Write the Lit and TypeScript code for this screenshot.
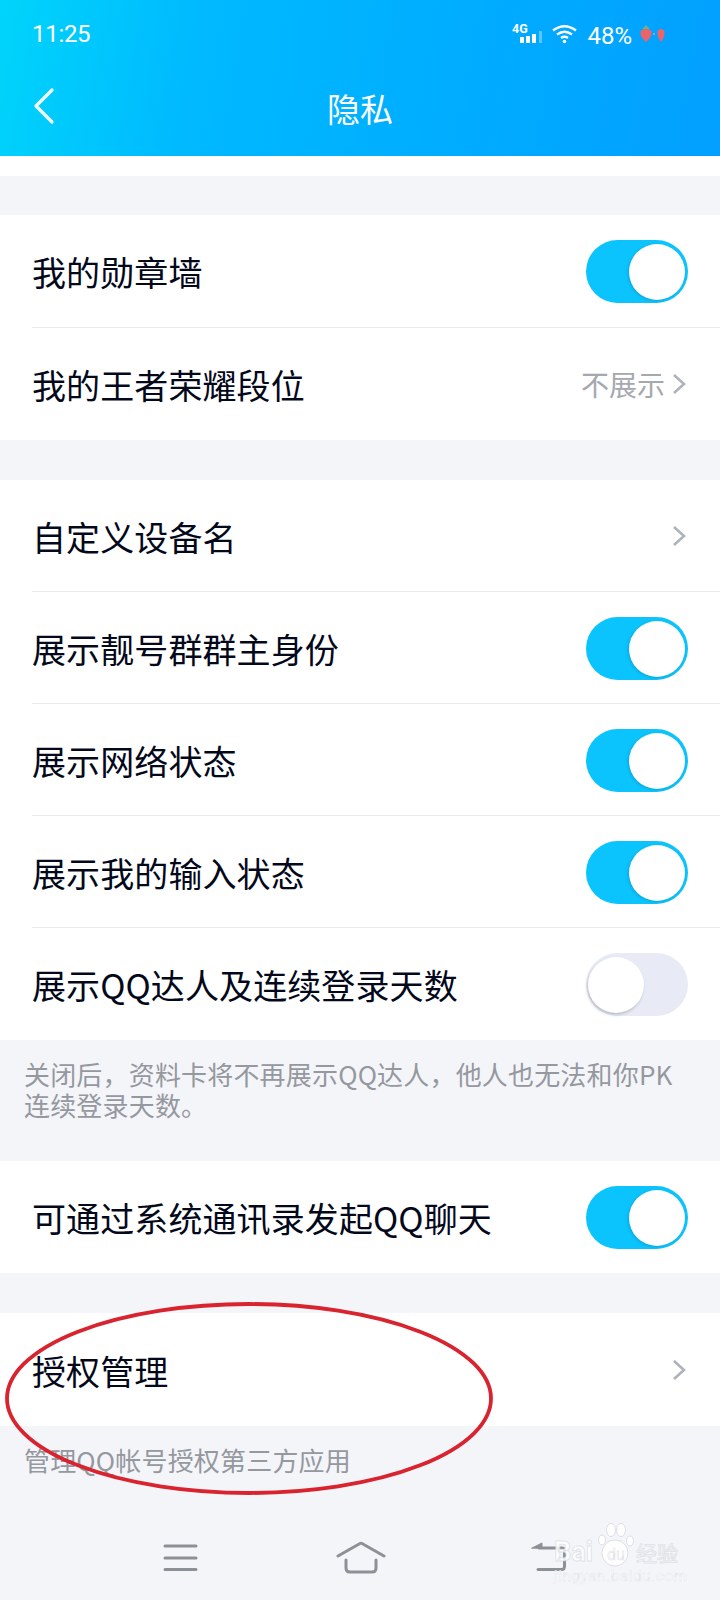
import { LitElement, html, css } from "lit";
import { customElement } from "lit/decorators.js";

const chevron = html`<svg class="chev" viewBox="0 0 14 22" width="14" height="22"><path d="M2 2 L12 11 L2 20" fill="none" stroke="#aeb2ba" stroke-width="2.6"/></svg>`;

@customElement("app-root")
export class AppRoot extends LitElement {
  static styles = css`
    :host { display: block; width: 720px; height: 1600px; }
    * { box-sizing: border-box; }
    .page {
      position: relative; width: 720px; height: 1600px; overflow: hidden;
      background: #f4f5f9; display: flex; flex-direction: column;
      font-family: "Noto Sans CJK SC", "Noto Sans", sans-serif; color: #03081a;
    }
    header {
      height: 156px; flex: none; color: #fff; padding: 0 0 0 32px;
      background: linear-gradient(100deg, #00d4fb 0%, #00b9ff 28%, #00acff 65%, #029fff 100%);
      display: flex; flex-direction: column;
    }
    .status { height: 68px; display: flex; align-items: center; justify-content: space-between; padding-right: 55px; }
    .time { font: 24px/1 "Roboto", sans-serif; letter-spacing: -0.3px; }
    .sys { display: flex; align-items: center; gap: 8px; font: 24px/1 "Roboto", sans-serif; }
    .sys .pct { margin-left: 2px; padding-top: 3px; }
    .nav { height: 88px; display: flex; align-items: center; position: relative; padding-bottom: 8px; }
    .title { flex: 1; text-align: center; font-size: 33px; line-height: 1; padding-right: 32px; }
    .back { position: absolute; left: 0; top: 18px; }
    .white { height: 20px; flex: none; background: #fff; }
    .group { background: #fff; flex: none; margin-top: 40px; }
    .g1 { margin-top: 39px; }
    .g1 .row + .row { margin-top: 1px; }
    .row { height: 112px; padding: 0 32px; position: relative; display: flex; align-items: center; justify-content: space-between; font-size: 34px; line-height: 1; }
    .row + .row::before { content: ""; position: absolute; left: 32px; right: 0; top: -1px; height: 1px; background: #e9eaec; }
    .label { position: relative; top: 1px; letter-spacing: 0.1px; }
    .value { display: flex; align-items: center; gap: 7px; font-size: 28px; color: #a5a8af; padding-right: 2px; }
    .chev { display: block; }
    .toggle { width: 102px; height: 63px; border-radius: 32px; background: #0cc4fd; margin-top: 1px; position: relative; }
    .toggle::after { content: ""; position: absolute; right: 3px; top: 4px; width: 56px; height: 56px; border-radius: 50%; background: #fff; box-shadow: -1px 1px 3px rgba(0,60,100,.22); }
    .toggle.off { background: #e8ebf5; }
    .toggle.off::after { right: auto; left: 2px; box-shadow: -1px 2px 3px rgba(60,60,80,.25); }
    .note { font-size: 26px; line-height: 31px; color: #95989f; padding: 0 24px; flex: none; letter-spacing: 0.18px; }
    .note.n1 { height: 121px; padding-top: 18px; }
    .note.n2 { padding-top: 18px; }
    .g3 { margin-top: 0; }
    .g4 .row { height: 113px; }
    .ellipse { position: absolute; left: 5px; top: 1302px; }
    .nv { position: absolute; }
    .nv.menu { left: 162px; top: 1542px; }
    .nv.home { left: 336px; top: 1541px; }
    .nv.ret { left: 531px; top: 1540px; }
    .wm { position: absolute; left: 530px; top: 1510px; width: 170px; height: 90px; }
    .wm span { position: absolute; color: rgba(255,255,255,.85); -webkit-text-stroke: 1px rgba(205,209,216,.55); line-height: 1; white-space: nowrap; }
    .wm .brand { left: 24px; top: 29px; font: 700 27px/1 "Roboto", sans-serif; }
    .wm .du { left: 77px; top: 37px; font: 400 16px/1 "Roboto", sans-serif; -webkit-text-stroke: .5px rgba(205,209,216,.7); }
    .wm .jy { left: 106px; top: 32px; font-size: 21px; }
    .wm .url { left: 24px; top: 59px; font: 400 15.500px/1 "Roboto", sans-serif; letter-spacing: .45px; -webkit-text-stroke: .4px rgba(205,209,216,.6); }
    .wm svg { position: absolute; left: 67px; top: 13px; }
  `;

  private toggle(on = true) {
    return html`<span class="toggle ${on ? "" : "off"}"></span>`;
  }

  render() {
    return html`<div class="page">
      <header>
        <div class="status">
          <span class="time">11:25</span>
          <span class="sys">
            <svg width="32" height="24" viewBox="0 0 32 24">
              <text x="0" y="11" font-family="Roboto" font-weight="700" font-size="12.5" fill="#fff">4G</text>
              <rect x="8" y="15" width="4" height="6" fill="#fff"/>
              <rect x="14" y="14" width="4" height="7" fill="#fff"/>
              <rect x="20" y="12" width="4" height="9" fill="#fff"/>
              <rect x="27" y="9" width="3" height="12" fill="#fff" opacity=".35"/>
            </svg>
            <svg width="25" height="20" viewBox="0 0 25 20" fill="none" stroke="#fff" stroke-width="2.3">
              <path d="M1 6.500 Q12.500 -2 24 6.500"/><path d="M5 10.500 Q12.500 5 20 10.500"/><path d="M9 14 Q12.500 11.500 16 14"/>
              <circle cx="12.500" cy="17.500" r="1.800" fill="#fff" stroke="none"/>
            </svg>
            <span class="pct">48%</span>
            <svg width="25" height="20" viewBox="0 0 25 20">
              <path d="M0.500 7 Q6 3 11.500 7 Q12.500 13 6 18 Q-0.500 13 0.500 7Z" fill="#e9646b"/>
              <path d="M2 5 L6 1 L10 5 Z" fill="#6fae8c"/>
              <circle cx="14" cy="10" r="1" fill="#c9a0b0"/>
              <path d="M17.500 7 Q21 3 24.500 7 Q25 13 21 18 Q17 13 17.500 7Z" fill="#e9646b"/>
            </svg>
          </span>
        </div>
        <div class="nav">
          <svg class="back" width="24" height="40" viewBox="0 0 24 40"><path d="M20 4 L4 20 L20 36" fill="none" stroke="#fff" stroke-width="3.200" stroke-linecap="round" stroke-linejoin="round" opacity=".95"/></svg>
          <div class="title">隐私</div>
        </div>
      </header>
      <div class="white"></div>
      <section class="group g1">
        <div class="row"><span class="label">我的勋章墙</span>${this.toggle()}</div>
        <div class="row"><span class="label">我的王者荣耀段位</span><span class="value">不展示${chevron}</span></div>
      </section>
      <section class="group">
        <div class="row"><span class="label">自定义设备名</span><span class="value">${chevron}</span></div>
        <div class="row"><span class="label">展示靓号群群主身份</span>${this.toggle()}</div>
        <div class="row"><span class="label">展示网络状态</span>${this.toggle()}</div>
        <div class="row"><span class="label">展示我的输入状态</span>${this.toggle()}</div>
        <div class="row"><span class="label">展示QQ达人及连续登录天数</span>${this.toggle(false)}</div>
      </section>
      <div class="note n1">关闭后，资料卡将不再展示QQ达人，他人也无法和你PK<br />连续登录天数。</div>
      <section class="group g3">
        <div class="row"><span class="label">可通过系统通讯录发起QQ聊天</span>${this.toggle()}</div>
      </section>
      <section class="group g4">
        <div class="row"><span class="label">授权管理</span><span class="value">${chevron}</span></div>
      </section>
      <div class="note n2">管理QQ帐号授权第三方应用</div>

      <svg class="ellipse" width="490" height="193" viewBox="0 0 490 193"><ellipse cx="244" cy="96.500" rx="242" ry="94.500" fill="none" stroke="#d9232e" stroke-width="3.800"/></svg>

      <svg class="nv menu" width="36" height="32" viewBox="0 0 36 32" fill="none" stroke="#8d9096" stroke-width="3" stroke-linecap="round"><path d="M3 4H34M3 16H34M3 27.500H34"/></svg>
      <svg class="nv home" width="50" height="34" viewBox="0 0 50 34" fill="none" stroke="#8d9096" stroke-width="3" stroke-linecap="round" stroke-linejoin="round"><path d="M2 15 L24 2.500 Q25 2 26 2.500 L48 15"/><path d="M10 19V27Q10 31 14 31H36Q40 31 40 27V19"/></svg>
      <svg class="nv ret" width="36" height="34" viewBox="0 0 36 34" fill="none" stroke="#8d9096" stroke-width="3" stroke-linecap="round"><path d="M8 8H31Q33.500 8 33.500 11V26Q33.500 29.500 31 29.500H7"/><path d="M1 8L11 3V8Z" fill="#8d9096" stroke-width="1"/></svg>

      <div class="wm">
        <svg width="37" height="44" viewBox="0 0 37 44" fill="rgba(255,255,255,.85)" stroke="rgba(205,209,216,.65)" stroke-width="1">
          <ellipse cx="5" cy="17" rx="3.500" ry="5"/><ellipse cx="14" cy="7" rx="4.500" ry="6.500"/><ellipse cx="24" cy="7" rx="4.500" ry="6.500"/><ellipse cx="33" cy="18" rx="3.500" ry="5"/>
          <ellipse cx="18" cy="30" rx="13" ry="13"/>
        </svg>
        <span class="brand">Bai</span><span class="du">du</span><span class="jy">经验</span>
        <span class="url">jingyan.baidu.com</span>
      </div>
    </div>`;
  }
}
